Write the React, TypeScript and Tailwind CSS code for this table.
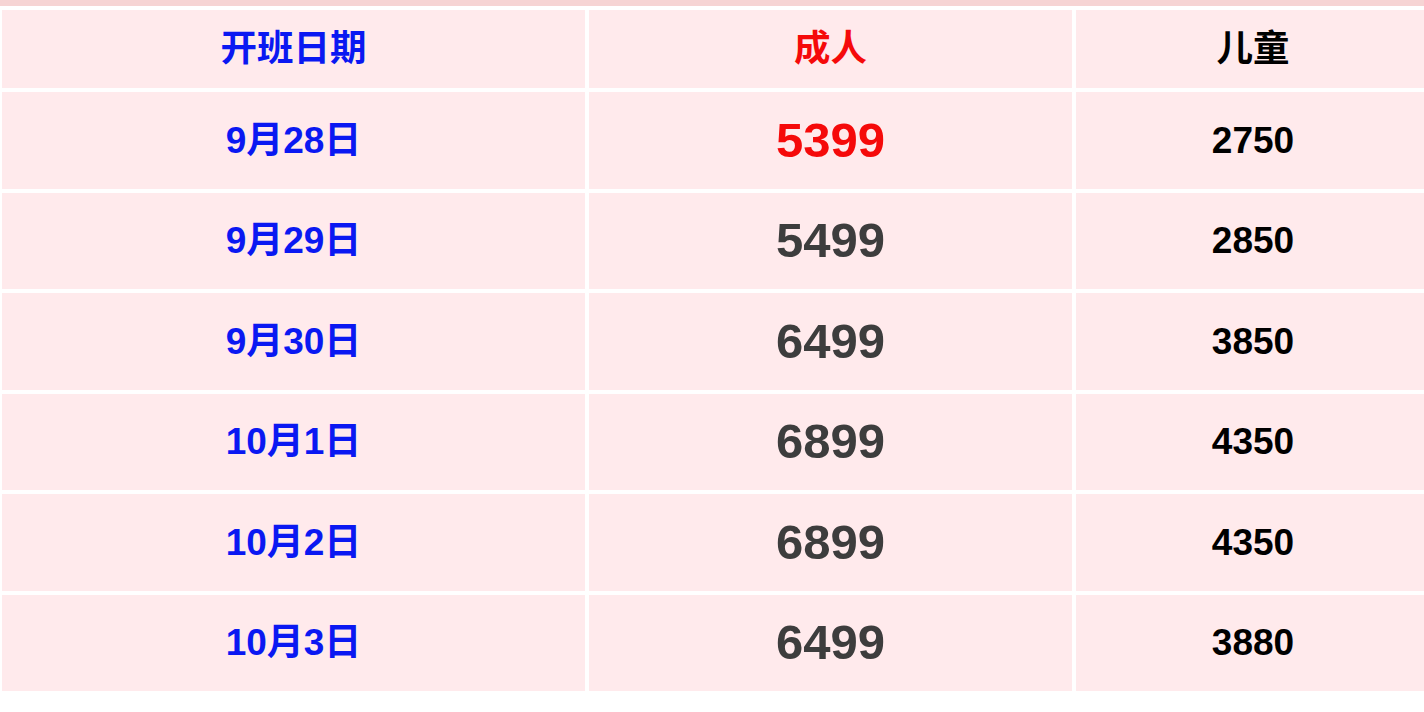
const rows = [
  { date: "9月28日", adult: "5399", child: "2750", hot: true },
  { date: "9月29日", adult: "5499", child: "2850" },
  { date: "9月30日", adult: "6499", child: "3850" },
  { date: "10月1日", adult: "6899", child: "4350" },
  { date: "10月2日", adult: "6899", child: "4350" },
  { date: "10月3日", adult: "6499", child: "3880" },
];

const font = "font-['Liberation_Sans','Noto_Sans_CJK_SC',sans-serif] font-bold";

export default function App() {
  return (
    <div className={`w-[1424px] h-[712px] overflow-hidden bg-white ${font}`}>
      <div className="h-[6px] bg-[#f6d4d4]" />
      <div className="mt-[4px] ml-[2px] grid grid-cols-[583px_483px_354px] grid-rows-[78px_repeat(6,96.5px)] gap-[4px]">
        <div className="bg-[#ffeaec] flex items-center justify-center text-[36.5px] text-[#0a18f2]">开班日期</div>
        <div className="bg-[#ffeaec] flex items-center justify-center text-[36.5px] text-[#f50a0a]">成人</div>
        <div className="bg-[#ffeaec] flex items-center justify-center text-[36.5px] text-black">儿童</div>
        {rows.map((r) => (
          <div key={r.date} className="contents">
            <div className="bg-[#ffeaec] flex items-center justify-center text-[37px] text-[#0a18f2]">{r.date}</div>
            <div className={`bg-[#ffeaec] flex items-center justify-center text-[49px] ${r.hot ? "text-[#f50a0a]" : "text-[#3d3d3d]"}`}>
              {r.adult}
            </div>
            <div className="bg-[#ffeaec] flex items-center justify-center text-[37px] text-black">{r.child}</div>
          </div>
        ))}
      </div>
    </div>
  );
}
